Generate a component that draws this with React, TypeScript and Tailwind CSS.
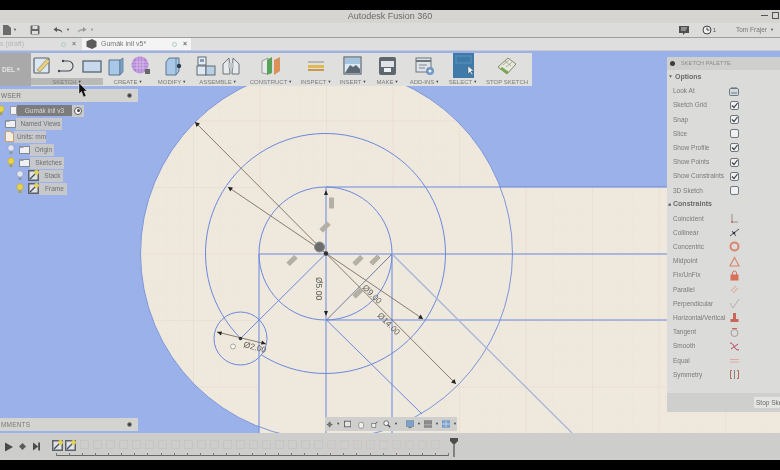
import React from "react";

const Bulb = ({ on }: { on?: boolean }) => (
  <svg width="8" height="11" viewBox="0 0 8 11" className="shrink-0">
    <circle cx="4" cy="4" r="3.2" fill={on ? "#e8d34a" : "#dfe6f2"} stroke={on ? "#b9a53a" : "#8a94a8"} strokeWidth="0.6" />
    <rect x="2.6" y="7.4" width="2.8" height="2.6" fill={on ? "#a99a4a" : "#8a94a8"} />
  </svg>
);

const Folder = () => (
  <svg width="11" height="9" viewBox="0 0 11 9" className="shrink-0">
    <path d="M.5 1.5h10v7H.5z" fill="#eef0f2" stroke="#70757c" strokeWidth="0.8" />
    <path d="M.5 1.5h4v1.5h-4z" fill="#9aa0a8" />
  </svg>
);

const SketchIcon = () => (
  <svg width="11" height="11" viewBox="0 0 11 11" className="shrink-0">
    <rect width="11" height="11" fill="#5c6166" />
    <rect x="1.5" y="1.5" width="8" height="8" fill="#dfe3e6" />
    <path d="M2 9 9 2" stroke="#3d4a5c" strokeWidth="1.2" />
    <circle cx="8.5" cy="2.5" r="2.4" fill="#e3d255" />
  </svg>
);

const UnitsIcon = () => (
  <svg width="9" height="11" viewBox="0 0 9 11" className="shrink-0">
    <path d="M.5.5h5l3 3v7h-8z" fill="#f5efe2" stroke="#d09a55" strokeWidth="0.9" />
  </svg>
);

type TreeRow = { pad: string; bulb?: "on" | "off"; icon: React.ReactNode; label: string; labelW: string };

const treeRows: TreeRow[] = [
  { pad: "pl-[5px]", icon: <Folder />, label: "Named Views", labelW: "w-[46px]" },
  { pad: "pl-[5px]", icon: <UnitsIcon />, label: "Units: mm", labelW: "w-[32px]" },
  { pad: "pl-[7px]", bulb: "off", icon: <Folder />, label: "Origin", labelW: "w-[24px]" },
  { pad: "pl-[7px]", bulb: "on", icon: <Folder />, label: "Sketches", labelW: "w-[34px]" },
  { pad: "pl-[16px]", bulb: "off", icon: <SketchIcon />, label: "Stack", labelW: "w-[24px]" },
  { pad: "pl-[16px]", bulb: "on", icon: <SketchIcon />, label: "Frame", labelW: "w-[28px]" },
];

const Browser = () => (
  <div className="absolute left-0 top-[38px] w-[138px] flex flex-col text-[6.5px] text-[#6f6f6f]">
    <div className="h-[13px] bg-[#d3d3cf] flex items-center justify-between pr-[6px] pl-[1px] tracking-wide">
      <span>WSER</span>
      <span className="w-[5px] h-[5px] rounded-full bg-[#3d3d3d] border border-[#888]" />
    </div>
    <div className="flex flex-col pt-[2px]">
      <div className="h-[13px] flex items-center">
        <span className="ml-[-3px]"><Bulb on /></span>
        <span className="ml-[5px] h-[9px] w-[7px] bg-[#f2f2f2] border border-[#999] rounded-[1px]" />
        <span className="h-[11px] w-[55px] bg-[#7c7c7c] text-[#d8d8d8] flex items-center justify-center">Gumák inil v3</span>
        <span className="h-[12px] w-[12px] bg-[#c9c9c9] flex items-center justify-center">
          <span className="w-[8px] h-[8px] rounded-full border border-[#555] bg-white flex items-center justify-center">
            <span className="w-[3px] h-[3px] rounded-full bg-[#444]" />
          </span>
        </span>
      </div>
      {treeRows.map((r) => (
        <div key={r.label} className={`h-[13px] flex items-center gap-[4px] ${r.pad}`}>
          {r.bulb && <Bulb on={r.bulb === "on"} />}
          {r.icon}
          <span className={`h-[12px] ${r.labelW} bg-[#c7c8cb] flex items-center justify-center whitespace-nowrap -ml-[4px] pl-[3px]`}>{r.label}</span>
        </div>
      ))}
    </div>
  </div>
);

const tool = { width: 22, height: 22, viewBox: "0 0 22 22" };

const I = {
  sketch: (
    <svg {...tool}>
      <rect x="3" y="3" width="15" height="15" rx="1" fill="#dbe7f2" stroke="#59636e" strokeWidth="1.2" />
      <path d="M6 15 16 4l3 2L9 17z" fill="#e8cf7c" stroke="#8a7a50" strokeWidth="0.6" />
    </svg>
  ),
  line: (
    <svg {...tool}>
      <path d="M3 16h9a4.500 4.500 0 0 0 0-10H7" fill="none" stroke="#3f4a57" strokeWidth="1.1" />
      <circle cx="3" cy="16" r="1.200" fill="#3f4a57" />
      <circle cx="7" cy="6" r="1.200" fill="#3f4a57" />
    </svg>
  ),
  rect: (
    <svg {...tool}>
      <rect x="2" y="6" width="18" height="11" fill="#c8d9ec" stroke="#4c5a68" strokeWidth="1.200" />
    </svg>
  ),
  box: (
    <svg {...tool}>
      <path d="M4 5h11v15H4z" fill="#a9c8e8" stroke="#52728f" />
      <path d="M15 5l3-2v14l-3 3z" fill="#7ea3c8" stroke="#52728f" strokeWidth="0.7" />
    </svg>
  ),
  mesh: (
    <svg {...tool}>
      <circle cx="10" cy="10" r="8.500" fill="#b485d8" />
      <path d="M2 7h16M2 10h16M2 13h16M7 2v16M10 2v16M13 2v16" stroke="#d9c6ea" strokeWidth="0.8" />
      <rect x="15" y="14" width="5" height="5" fill="#666" />
    </svg>
  ),
  modify: (
    <svg {...tool}>
      <path d="M5 7l3-4h10v13l-3 4H5z" fill="#a9c8e8" stroke="#5a7590" />
      <path d="M15 3v17" stroke="#5a7590" strokeWidth="0.8" />
      <circle cx="18" cy="11" r="2.200" fill="#2f3d4c" />
    </svg>
  ),
  assemble: (
    <svg {...tool}>
      <rect x="3" y="2" width="8" height="8" fill="#e8edf2" stroke="#5f6a75" />
      <rect x="2" y="11" width="9" height="9" fill="#dfe8f1" stroke="#5f6a75" />
      <rect x="11" y="11" width="9" height="9" fill="#b9cfe4" stroke="#5f6a75" />
      <path d="M5 4h4v3H5z" fill="#7d9fc0" />
    </svg>
  ),
  joint: (
    <svg {...tool}>
      <path d="M3 19V9l6-6 1 16zM12 19l1-16 6 6v10z" fill="#e7e9ec" stroke="#6c747c" />
      <path d="M8 8h6v5H8z" fill="#c0c5cb" />
    </svg>
  ),
  construct: (
    <svg {...tool}>
      <path d="M2 6l6-3v16l-6-1z" fill="#e8eaec" stroke="#7c7c7c" strokeWidth="0.7" />
      <path d="M7 5l5-3v16l-5 2z" fill="#58a25c" />
      <path d="M14 5l6-3v14l-6 4z" fill="#d9935a" />
    </svg>
  ),
  inspect: (
    <svg {...tool}>
      <path d="M3 7h16" stroke="#9a9a9a" strokeWidth="1.200" />
      <rect x="3" y="10" width="16" height="3" fill="#e0b85a" />
      <rect x="3" y="14" width="16" height="2" fill="#c89a48" />
    </svg>
  ),
  insert: (
    <svg {...tool}>
      <rect x="2" y="2" width="17" height="17" fill="#dfeaf3" stroke="#5d6670" strokeWidth="1.200" />
      <path d="M3 18l5-8 3 2 3-2 4 4v4z" fill="#5c6975" />
      <rect x="3" y="3" width="15" height="6" fill="#a5c5df" />
    </svg>
  ),
  make: (
    <svg {...tool}>
      <rect x="2" y="2" width="17" height="18" rx="2" fill="#5f666e" />
      <rect x="4" y="6" width="13" height="6" fill="#dde3e8" />
      <rect x="7" y="13" width="7" height="4" fill="#eef1f3" />
    </svg>
  ),
  addins: (
    <svg {...tool}>
      <rect x="2" y="3" width="15" height="14" fill="#dfe3e7" stroke="#6c747c" />
      <path d="M2 6h15" stroke="#6c747c" strokeWidth="2" />
      <path d="M5 10h8M5 13h6" stroke="#7c848c" />
      <circle cx="16" cy="16" r="4" fill="#6f97c4" />
      <circle cx="16" cy="16" r="1.500" fill="#eef2f6" />
    </svg>
  ),
  select: (
    <svg width="21" height="25" viewBox="0 0 21 25">
      <rect width="21" height="25" fill="#3f7aa8" />
      <rect x="3" y="3" width="15" height="7" fill="none" stroke="#5b93bc" />
      <path d="M15 13v8l2-2 2 3 1-1-2-3h3z" fill="#eef3f7" stroke="#24445e" strokeWidth="0.4" />
    </svg>
  ),
  stop: (
    <svg {...tool}>
      <path d="M2 12 12 3l8 6-9 10z" fill="#e8e8df" stroke="#7d8a6e" />
      <path d="M4 14l7 5 2-2-7-5z" fill="#79a94f" />
      <path d="M7 10l6-5M10 12l6-5M9 6l6 5" stroke="#8f9684" strokeWidth="0.7" />
    </svg>
  ),
};

const ribbon = [
  { label: "SKETCH", w: "w-[72px]", icons: [I.sketch, I.line, I.rect], active: true },
  { label: "CREATE", w: "w-[50px]", icons: [I.box, I.mesh] },
  { label: "MODIFY", w: "w-[38px]", icons: [I.modify] },
  { label: "ASSEMBLE", w: "w-[54px]", icons: [I.assemble, I.joint] },
  { label: "CONSTRUCT", w: "w-[52px]", icons: [I.construct] },
  { label: "INSPECT", w: "w-[38px]", icons: [I.inspect] },
  { label: "INSERT", w: "w-[36px]", icons: [I.insert] },
  { label: "MAKE", w: "w-[33px]", icons: [I.make] },
  { label: "ADD-INS", w: "w-[41px]", icons: [I.addins] },
  { label: "SELECT", w: "w-[36px]", icons: [I.select] },
  { label: "STOP SKETCH", w: "w-[52px]", icons: [I.stop], noCaret: true },
];

const Ribbon = () => (
  <div className="absolute left-0 top-[2px] flex h-[33px]">
    <div className="w-[31px] bg-[#a9a9a9] text-[#e4e4e4] text-[6.5px] flex items-center justify-end pr-[11px] gap-[2px] font-bold">
      DEL <span className="text-[5px]">▾</span>
    </div>
    <div className="flex bg-[#dfdfdd] w-[501px]">
      {ribbon.map((g) => (
        <div key={g.label} className={`${g.w} shrink-0 flex flex-col items-center`}>
          <div className="h-[25px] flex items-center justify-center gap-[3px]">
            {g.icons.map((ic, i) => (
              <span key={i} className="flex">{ic}</span>
            ))}
          </div>
          <div className={`h-[7px] w-full flex items-center justify-center text-[6px] leading-none text-[#7b7b7b] whitespace-nowrap ${g.active ? "bg-[#b9b9b7]" : ""}`}>
            {g.label}
            {!g.noCaret && <span className="text-[4px] ml-[1px] text-[#444]">▼</span>}
          </div>
        </div>
      ))}
    </div>
  </div>
);

const Check = ({ on }: { on: boolean }) => (
  <svg width="9" height="9" viewBox="0 0 9 9">
    <rect x="0.500" y="0.500" width="8" height="8" rx="1.500" fill="#eef0f1" stroke="#6f767c" />
    {on && <path d="M2 4.500l2 2 3.500-4.500" fill="none" stroke="#3c4248" strokeWidth="1.200" />}
  </svg>
);

const LookAt = () => (
  <svg width="10" height="9" viewBox="0 0 10 9">
    <rect x="0.500" y="1.500" width="9" height="7" rx="1" fill="#cfd8df" stroke="#6f767c" />
    <path d="M2 6h6M3 1V0h4v1" stroke="#6f767c" fill="none" />
  </svg>
);

const options: [string, React.ReactNode][] = [
  ["Look At", <LookAt />],
  ["Sketch Grid", <Check on />],
  ["Snap", <Check on />],
  ["Slice", <Check on={false} />],
  ["Show Profile", <Check on />],
  ["Show Points", <Check on />],
  ["Show Constraints", <Check on />],
  ["3D Sketch", <Check on={false} />],
];

const c = { width: 11, height: 11, viewBox: "0 0 11 11", fill: "none" };
const constraints: [string, React.ReactNode][] = [
  ["Coincident", <svg {...c}><path d="M3 1v8h6" stroke="#9c8f88" /><circle cx="3" cy="9" r="1" fill="#c46a5a" /></svg>],
  ["Collinear", <svg {...c}><path d="M1 9l9-7M3 4l4 5" stroke="#4b5058" /><circle cx="5" cy="6" r="1.300" fill="#2f333a" /></svg>],
  ["Concentric", <svg {...c}><circle cx="5.500" cy="5.500" r="4" stroke="#d9836e" strokeWidth="2" /></svg>],
  ["Midpoint", <svg {...c}><path d="M5.500 1.500 10 10H1z" stroke="#d9836e" strokeWidth="1.100" /></svg>],
  ["Fix/UnFix", <svg {...c}><rect x="1.500" y="4.500" width="8" height="6" fill="#d9705a" /><path d="M3.500 5V3a2 2 0 0 1 4 0v2" stroke="#d9705a" /></svg>],
  ["Parallel", <svg {...c}><path d="M2 7 7 2M4 9l5-5" stroke="#dcb4ac" strokeWidth="1.300" /></svg>],
  ["Perpendicular", <svg {...c}><path d="M1 5l3 5 6-9" stroke="#b8afa8" /></svg>],
  ["Horizontal/Vertical", <svg {...c}><rect x="4" y="1" width="3" height="6" fill="#c9665a" /><rect x="1.500" y="7" width="8" height="3" fill="#c9665a" /></svg>],
  ["Tangent", <svg {...c}><circle cx="5.500" cy="6" r="3.500" stroke="#a89a90" /><path d="M3 1.500h5" stroke="#c46a5a" /></svg>],
  ["Smooth", <svg {...c}><path d="M1 2c5 0 3 7 9 7M2 8l7-5" stroke="#b8405a" /></svg>],
  ["Equal", <svg {...c}><path d="M1 4.500h9M1 7h9" stroke="#e0a8a0" /></svg>],
  ["Symmetry", <svg {...c}><path d="M3 1.500H1.500v8H3M8 1.500h1.500v8H8" stroke="#b36a5a" /><path d="M5.500 1v9" stroke="#888" /></svg>],
];

const PRow = ({ label, icon }: { label: string; icon: React.ReactNode }) => (
  <div className="h-[14.2px] flex items-center pl-[6px] text-[6.5px] text-[#7a7a7a] whitespace-nowrap">
    <span className="w-[55px]">{label}</span>
    <span className="flex w-[12px] justify-center">{icon}</span>
  </div>
);

const Palette = () => (
  <div className="absolute right-0 top-[6px] w-[113px] h-[355px] bg-[#dbdbd9] flex flex-col text-[#6a6a6a]">
    <div className="h-[13px] bg-[#cfcfcd] flex items-center gap-[6px] pl-[3px] text-[5.5px] tracking-wide text-[#8a8a8a]">
      <span className="w-[5px] h-[5px] rounded-full bg-[#3d3d3d]" />
      SKETCH PALETTE
    </div>
    <div className="h-[14px] flex items-center pl-[1px] text-[7px] font-bold gap-[2px]"><span className="text-[5px]">▼</span>Options</div>
    {options.map(([l, ic]) => <PRow key={l} label={l} icon={ic} />)}
    <div className="h-[14px] flex items-center pl-[1px] text-[7px] font-bold gap-[2px]"><span className="text-[5px]">■</span>Constraints</div>
    {constraints.map(([l, ic]) => <PRow key={l} label={l} icon={ic} />)}
    <div className="mt-auto h-[19px] bg-[#cfcfcd] flex items-center justify-end">
      <span className="h-[11px] w-[26px] bg-[#e4e4e2] text-[6.5px] pl-[2px] whitespace-nowrap overflow-hidden flex items-center">Stop Sketch</span>
    </div>
  </div>
);

const NavBar = () => (
  <div className="absolute left-[325px] top-[366px] h-[14px] w-[132px] bg-[#cfcfcd] flex items-center gap-[3px] pl-[1px]">
    <svg width="9" height="9" viewBox="0 0 9 9"><path d="M1 4.500h7M4.500 1v7" stroke="#555" strokeWidth="1.500" /><circle cx="4.500" cy="4.500" r="2.500" fill="#777" /></svg>
    <span className="text-[4px] text-[#444]">▼</span>
    <svg className="ml-[1px]" width="9" height="8" viewBox="0 0 9 8"><rect x="0.500" y="0.500" width="8" height="7" fill="#e3e3e3" stroke="#555" /></svg>
    <svg className="ml-[4px]" width="8" height="9" viewBox="0 0 8 9"><rect x="1" y="2" width="6" height="7" rx="2" fill="#f0f0f0" stroke="#666" strokeWidth="0.700" /></svg>
    <svg className="ml-[3px]" width="9" height="9" viewBox="0 0 9 9"><rect x="1" y="3" width="5" height="5" fill="#eee" stroke="#555" strokeWidth="0.700" /><path d="M6 3l2-2" stroke="#333" /></svg>
    <svg className="ml-[2px]" width="10" height="10" viewBox="0 0 10 10"><circle cx="4" cy="4" r="3" fill="#f4f4f4" stroke="#555" /><path d="M6 6l3 3" stroke="#444" strokeWidth="1.500" /></svg>
    <span className="text-[4px] text-[#444]">▼</span>
    <svg className="ml-[5px]" width="10" height="10" viewBox="0 0 10 10"><rect y="1" width="10" height="7" fill="#7ba2cc" stroke="#65707a" strokeWidth="0.600" /><path d="M3 9.500h4" stroke="#555" /></svg>
    <span className="text-[4px] text-[#444]">▼</span>
    <svg width="10" height="10" viewBox="0 0 10 10"><rect y="1" width="10" height="8" fill="#8c8c8c" stroke="#666" strokeWidth="0.600" /><path d="M0 6h10" stroke="#bbb" /></svg>
    <span className="text-[4px] text-[#444]">▼</span>
    <svg width="10" height="10" viewBox="0 0 10 10"><rect y="1" width="10" height="8" fill="#7ba2cc" stroke="#5f87b3" strokeWidth="0.600" /><path d="M0 5h10M5 1v8" stroke="#cfe0f0" /></svg>
    <span className="text-[4px] text-[#444]">▼</span>
  </div>
);

const Comments = () => (
  <div className="absolute left-0 top-[367px] w-[138px] h-[13px] bg-[#d3d3cf] flex items-center justify-between pr-[6px] pl-[1px] text-[6.5px] text-[#7a7a7a] tracking-wide">
    <span>MMENTS</span>
    <span className="w-[5px] h-[5px] rounded-full bg-[#3d3d3d] border border-[#888]" />
  </div>
);

const slashes: [number, number, number][] = [
  [292, 260.5, 45],
  [358, 260.5, 45],
  [375, 260, 45],
  [325, 227, 45],
  [331.5, 203, 0],
  [358, 293, 45],
];

const Sketch = () => (
  <svg className="absolute inset-0" width="780" height="382" viewBox="0 51 780 382">
    <defs>
      <pattern id="fine" width="13.3" height="13.3" patternUnits="userSpaceOnUse" x="326" y="253.500">
        <path d="M13.300 0H0V13.300" fill="none" stroke="#ebe3d6" strokeWidth="0.600" />
      </pattern>
      <pattern id="major" width="66.500" height="66.500" patternUnits="userSpaceOnUse" x="326" y="253.500">
        <path d="M66.500 0H0V66.500" fill="none" stroke="#e6dccc" strokeWidth="1" />
      </pattern>
      <clipPath id="beigeClip">
        <path d="M140.500 253.500a186 186 0 1 0 372 0a186 186 0 1 0-372 0zM259 187h521v246H259z" />
      </clipPath>
    </defs>
    <rect x="259" y="187" width="521" height="246" fill="#efe8dc" />
    <circle cx="326.500" cy="253.500" r="186" fill="#efe8dc" />
    <g clipPath="url(#beigeClip)">
      <rect x="0" y="51" width="780" height="382" fill="url(#fine)" />
      <rect x="0" y="51" width="780" height="382" fill="url(#major)" />
    </g>
    <g fill="none" stroke="#6a88de" strokeWidth="1">
      <circle cx="326.500" cy="253.500" r="186" stroke="#7d95da" />
      <path d="M240.650 338.350A120 120 0 1 1 261.500 355" />
      <circle cx="325.500" cy="253.500" r="66.500" />
      <circle cx="240.500" cy="338.500" r="26.500" />
      <path d="M326 187H667M259 254H667M326 320H667M326 187V433M392 254V433M259 254V433" />
      <path d="M240.500 338.500 326 253.500M326.500 320 422 414" />
      <path d="M392 254 572 433" stroke="#a3b4dd" strokeWidth="1.300" />
      <path d="M326.500 320 392 254" stroke="#6f7d9e" />
    </g>
    <g fill="none" stroke="#7c6f60" strokeWidth="0.900">
      <path d="M195 122 456 384M228 187 423 319M217 332 266 344" />
    </g>
    <g fill="#222">
      <path d="M195 122l5 1.500-3.500 3.500zM456 384l-5-1.500 3.500-3.500zM228 187l5 .5-2.800 4zM423 319l-5-.5 2.800-4zM217 332l5-.5-1 4zM266 344l-5 .5 1-4zM326 190l2 5h-4zM326 316l2-5h-4z" />
    </g>
    <g fill="#b5b0a5">
      {slashes.map(([x, y, r]) => (
        <rect key={`${x}-${y}`} x={x - 2.500} y={y - 5.500} width="5" height="11" rx="0.500" transform={`rotate(${r} ${x} ${y})`} />
      ))}
    </g>
    <circle cx="319.500" cy="247" r="5" fill="#6c6c6c" stroke="#8c8c8c" />
    <circle cx="326" cy="253.500" r="2.200" fill="#333" />
    <circle cx="240.500" cy="338.500" r="1.800" fill="#333" />
    <circle cx="233" cy="346.500" r="2.500" fill="#f8f6f1" stroke="#888" strokeWidth="0.700" />
    <g fontFamily="Liberation Sans, sans-serif" fontSize="8.500" fill="#5f5f5a">
      <text transform="translate(316 277) rotate(90)">Ø5.00</text>
      <text transform="translate(362 288) rotate(45)">Ø9.00</text>
      <text transform="translate(377 316) rotate(45)">Ø14.00</text>
      <text transform="translate(243 347) rotate(15)">Ø2.00</text>
    </g>
  </svg>
);

const TopBar = () => (
  <>
    <div className="h-[10px] bg-black shrink-0" />
    <div className="h-[13px] bg-[#d6d5d1] shrink-0 flex items-center justify-center relative text-[9px] text-[#6a6a6a]">
      Autodesk Fusion 360
      <div className="absolute right-[1px] top-[2px] flex items-center gap-[4px]">
        <span className="w-[7px] h-[1px] bg-[#555]" />
        <span className="w-[7px] h-[7px] border border-[#555]" />
      </div>
    </div>
    <div className="h-[15px] bg-[#dcdcda] shrink-0 flex items-center pl-[3px] pr-[6px] border-b border-[#9d9d9b] text-[#555]">
      <svg width="8" height="10" viewBox="0 0 8 10"><path d="M0 0h5l3 3v7H0z" fill="#6b6b6b" /></svg>
      <span className="text-[4px] ml-[2px]">▼</span>
      <svg className="ml-[13px]" width="10" height="10" viewBox="0 0 10 10"><rect x="0.500" y="0.500" width="9" height="9" rx="1" fill="#666" /><rect x="2.500" y="1" width="5" height="3" fill="#ddd" /><rect x="2" y="6" width="6" height="3" fill="#ddd" /></svg>
      <svg className="ml-[13px]" width="10" height="8" viewBox="0 0 10 8"><path d="M9.500 7C9 4 7 3 4 3V1L.5 3.500 4 6V4.500c2 0 4 .5 5.500 2.500z" fill="#555" /></svg>
      <span className="text-[4px] ml-[3px]">▼</span>
      <svg className="ml-[7px] opacity-50" width="10" height="8" viewBox="0 0 10 8"><path d="M.5 7C1 4 3 3 6 3V1l3.500 2.500L6 6V4.500c-2 0-4 .5-5.500 2.500z" fill="#555" /></svg>
      <span className="text-[4px] ml-[3px] opacity-60">▼</span>
      <div className="ml-auto flex items-center">
        <svg width="10" height="9" viewBox="0 0 10 9"><path d="M0 0h10v7H6L4 9V7H0z" fill="#4f4f4f" /><path d="M2 2h6M2 4h5" stroke="#ccc" /></svg>
        <svg className="ml-[13px]" width="10" height="10" viewBox="0 0 10 10"><circle cx="5" cy="5" r="4" fill="#eee" stroke="#444" /><path d="M5 2.500V5h2.500" stroke="#444" fill="none" /></svg>
        <span className="text-[6px] ml-[1px]">1</span>
        <span className="ml-[20px] text-[6.500px] text-[#777] whitespace-nowrap">Tom Frajer</span>
        <span className="text-[4px] ml-[3px]">▼</span>
      </div>
    </div>
    <div className="h-[13px] bg-[#dedede] shrink-0 flex text-[7px] text-[#888] border-b border-[#c9c9cf]">
      <div className="w-[80px] flex items-center justify-between pr-[4px] text-[#b5b5b5]">
        <span className="whitespace-nowrap">s (draft)</span>
        <span className="flex gap-[6px] items-center">
          <span className="w-[5px] h-[5px] rounded-full border border-[#a9cbc4]" />
          <span className="text-[#777] font-bold">×</span>
        </span>
      </div>
      <div className="w-[109px] ml-[2px] bg-[#f4f4f4] flex items-center pl-[4px] pr-[4px]">
        <svg width="11" height="10" viewBox="0 0 9 9"><path d="M0 2l5-2 4 2v5l-4 2-5-2z" fill="#5c5c5c" /></svg>
        <span className="ml-[4px] whitespace-nowrap text-[#777]">Gumák inil v5*</span>
        <span className="ml-auto w-[5px] h-[5px] rounded-full border border-[#a9cbc4]" />
        <span className="ml-[6px] text-[#666] font-bold">×</span>
      </div>
    </div>
  </>
);

const Timeline = () => (
  <div className="h-[27px] shrink-0 bg-[#cdcdcb] relative flex items-center pl-[5px]">
    <svg width="8" height="10" viewBox="0 0 9 10"><path d="M0 0l9 5-9 5z" fill="#4a4a4a" /></svg>
    <svg className="ml-[6px]" width="7" height="7" viewBox="0 0 8 8"><path d="M4 0l4 4-4 4-4-4z" fill="#5a5a5a" /></svg>
    <svg className="ml-[7px]" width="7" height="9" viewBox="0 0 8 9"><path d="M0 0l6 4.500L0 9zM6 0h2v9H6z" fill="#4a4a4a" /></svg>
    <span className="ml-[12px] flex gap-[2px] pb-[2px]">
      <SketchIcon />
      <SketchIcon />
    </span>
    <span className="ml-[4px] flex gap-[4px] opacity-10 pb-[4px]">
      {Array.from({ length: 28 }).map((_, i) => (
        <span key={i} className={`w-[9px] h-[9px] border ${i > 18 ? "border-[#d88]" : "border-[#888]"}`} />
      ))}
    </span>
    <div className="absolute left-[56px] bottom-[4px] w-[393px] h-[3px] border-b border-[#666] flex justify-between">
      {Array.from({ length: 31 }).map((_, i) => (
        <span key={i} className="w-px h-[3px] bg-[#777]" />
      ))}
    </div>
    <svg className="absolute left-[450px] top-[5px]" width="8" height="19" viewBox="0 0 8 19"><path d="M0 0h8v3L5 6H3L0 3z" fill="#4d4d4d" /><path d="M4 5v14" stroke="#4d4d4d" strokeWidth="1.200" /></svg>
  </div>
);

export default function App() {
  return (
    <div className="w-[780px] h-[470px] flex flex-col overflow-hidden bg-black font-['Liberation_Sans',sans-serif] blur-[0.6px]">
      <TopBar />
      <div className="relative h-[382px] shrink-0 bg-[#9ab1ea] overflow-hidden">
        <Sketch />
        <Ribbon />
        <Browser />
        <Comments />
        <NavBar />
        <Palette />
        <svg className="absolute left-[78px] top-[32px]" width="9" height="15" viewBox="0 0 9 15">
          <path d="M1 0v11l2.500-2.500L5.500 14 8 13 6 8h3z" fill="#111" stroke="#fff" strokeWidth="0.400" />
        </svg>
      </div>
      <Timeline />
      <div className="flex-1 bg-black" />
    </div>
  );
}
